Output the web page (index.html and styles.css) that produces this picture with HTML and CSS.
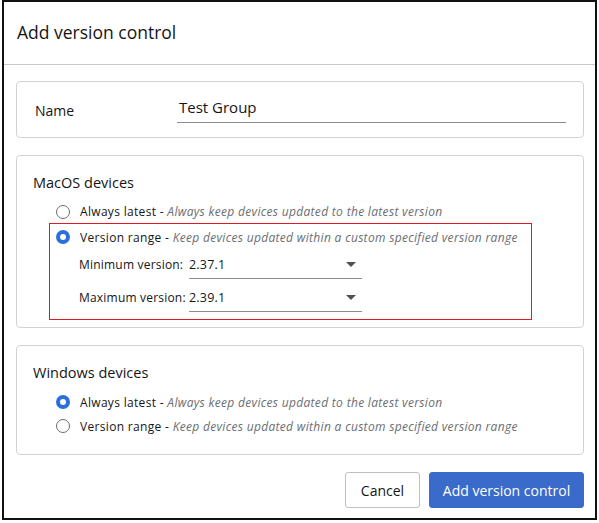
FILE: index.html
```html
<!DOCTYPE html>
<html>
<head>
<meta charset="utf-8">
<link rel="stylesheet" href="styles.css">
</head>
<body>
<div class="frame">
  <div class="header">Add version control</div>
  <div class="content">
    <div class="card name-card">
      <div class="label">Name</div>
      <div class="text-input">Test Group</div>
    </div>
    <div class="card group">
      <div class="group-title">MacOS devices</div>
      <div class="options">
        <div class="option first"><span class="radio"></span><span class="opt-name">Always latest - </span><span class="opt-desc">Always keep devices updated to the latest version</span></div>
        <div class="highlight">
          <div class="option"><span class="radio checked"></span><span class="opt-name">Version range - </span><span class="opt-desc">Keep devices updated within a custom specified version range</span></div>
          <div class="version-row min"><span class="v-label">Minimum version:</span><span class="select"><span>2.37.1</span><span class="caret"></span></span></div>
          <div class="version-row"><span class="v-label">Maximum version:</span><span class="select"><span>2.39.1</span><span class="caret"></span></span></div>
        </div>
      </div>
    </div>
    <div class="card group win">
      <div class="group-title">Windows devices</div>
      <div class="options">
        <div class="option"><span class="radio checked"></span><span class="opt-name">Always latest - </span><span class="opt-desc">Always keep devices updated to the latest version</span></div>
        <div class="option"><span class="radio"></span><span class="opt-name">Version range - </span><span class="opt-desc">Keep devices updated within a custom specified version range</span></div>
      </div>
    </div>
    <div class="actions">
      <button class="btn secondary">Cancel</button>
      <button class="btn primary">Add version control</button>
    </div>
  </div>
</div>
</body>
</html>
```
FILE: styles.css
```css
html, body { margin: 0; padding: 0; background: #fff; }
body { font-family: "Open Sans", "Liberation Sans", sans-serif; color: #151515; }
.frame {
  margin-left: 2px;
  width: 591px;
  height: 516px;
  border: 2px solid #111;
  box-sizing: content-box;
}
.header {
  height: 63px;
  box-sizing: border-box;
  padding: 18px 0 0 13px;
  font-size: 17.5px;
  line-height: 24px;
  border-bottom: 1px solid #c7c7c7;
}
.content {
  padding: 16px 11px 0 12px;
  display: flex;
  flex-direction: column;
  gap: 17px;
}
.card {
  border: 1px solid #d2d2d2;
  border-radius: 4px;
}
.name-card {
  height: 55px;
  display: flex;
  align-items: center;
  padding: 0 17px 0 18px;
}
.label { width: 142px; font-size: 14px; margin-top: 2px; }
.text-input {
  flex: 1;
  font-size: 15px;
  padding: 0 0 5px 2px;
  border-bottom: 1px solid #8a8d90;
  margin-top: 1px;
}
.group { padding: 17px 16px 0 16px; height: 173px; box-sizing: border-box; }
.group.win { height: 110px; }
.group-title { font-size: 14.5px; line-height: 20px; }
.options { margin-top: 7px; }
.win .options { margin-top: 7px; }
.option {
  display: flex;
  align-items: center;
  height: 24px;
  font-size: 12px;
  letter-spacing: 0.32px;
  padding-left: 23px;
}
.option.first { height: 23px; }
.radio {
  width: 14px; height: 14px;
  border-radius: 50%;
  border: 1.5px solid #6a6e73;
  box-sizing: border-box;
  margin-right: 10px;
  flex: none;
}
.radio.checked {
  border: 4px solid #2b6fdc;
  background: #fff;
}
.opt-name { white-space: pre; color: #151515; }
.opt-desc { font-style: italic; color: #6a6e73; }
.highlight {
  border: 1px solid rgb(228, 24, 34);
  margin-left: 16px;
  width: 483px;
  height: 97px;
  box-sizing: border-box;
  padding-top: 1px;
}
.highlight .option { padding-left: 6px; }
.version-row {
  display: flex;
  align-items: flex-end;
  height: 33px;
  font-size: 12px;
  letter-spacing: 0.2px;
  padding-left: 29px;
}
.version-row.min { height: 30px; }
.v-label { width: 110px; padding-bottom: 6px; }
.select {
  width: 173px;
  display: flex;
  justify-content: space-between;
  align-items: center;
  padding: 0 6px 5px 0;
  border-bottom: 1px solid #8a8d90;
  box-sizing: border-box;
  font-size: 12.5px;
}
.caret {
  width: 0; height: 0;
  border-left: 5px solid transparent;
  border-right: 5px solid transparent;
  border-top: 5px solid #4f5255;
}
.actions {
  display: flex;
  justify-content: flex-end;
  gap: 9px;
}
.btn {
  font-family: inherit;
  font-size: 14px;
  height: 36px;
  border-radius: 3px;
  padding: 0;
  white-space: nowrap;
  cursor: pointer;
}
.btn.secondary {
  background: #fff;
  border: 1px solid #c0c0c0;
  color: #151515;
  width: 75px;
}
.btn.primary {
  background: #3a6bcb;
  border: 1px solid #3a6bcb;
  color: #fff;
  width: 155px;
}
```
